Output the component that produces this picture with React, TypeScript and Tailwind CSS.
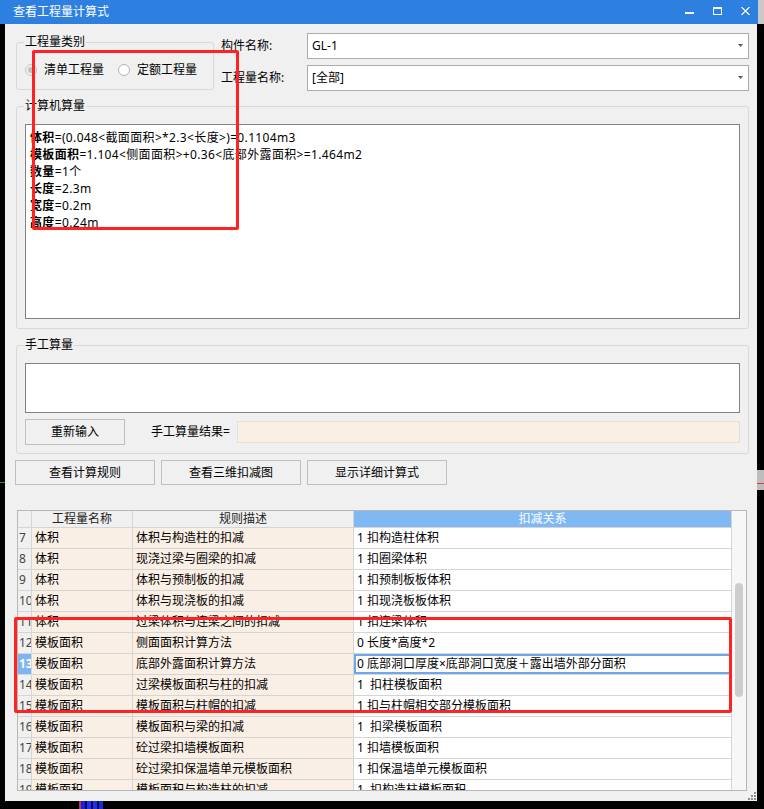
import React from 'react';

interface RuleRow {
  no: number;
  name: string;
  desc: string;
  relation: string;
}

const rules: RuleRow[] = [
  { no: 7, name: '体积', desc: '体积与构造柱的扣减', relation: '1 扣构造柱体积' },
  { no: 8, name: '体积', desc: '现浇过梁与圈梁的扣减', relation: '1 扣圈梁体积' },
  { no: 9, name: '体积', desc: '体积与预制板的扣减', relation: '1 扣预制板板体积' },
  { no: 10, name: '体积', desc: '体积与现浇板的扣减', relation: '1 扣现浇板板体积' },
  { no: 11, name: '体积', desc: '过梁体积与连梁之间的扣减', relation: '1 扣连梁体积' },
  { no: 12, name: '模板面积', desc: '侧面面积计算方法', relation: '0 长度*高度*2' },
  { no: 13, name: '模板面积', desc: '底部外露面积计算方法', relation: '0 底部洞口厚度×底部洞口宽度＋露出墙外部分面积' },
  { no: 14, name: '模板面积', desc: '过梁模板面积与柱的扣减', relation: '1\u00a0\u00a0扣柱模板面积' },
  { no: 15, name: '模板面积', desc: '模板面积与柱帽的扣减', relation: '1 扣与柱帽相交部分模板面积' },
  { no: 16, name: '模板面积', desc: '模板面积与梁的扣减', relation: '1\u00a0\u00a0扣梁模板面积' },
  { no: 17, name: '模板面积', desc: '砼过梁扣墙模板面积', relation: '1 扣墙模板面积' },
  { no: 18, name: '模板面积', desc: '砼过梁扣保温墙单元模板面积', relation: '1 扣保温墙单元模板面积' },
  { no: 19, name: '模板面积', desc: '模板面积与构造柱的扣减', relation: '1\u00a0\u00a0扣构造柱模板面积' },
];

const formulas = [
  { key: '体积', rest: '=(0.048<截面面积>*2.3<长度>)=0.1104m3' },
  { key: '模板面积', rest: '=1.104<侧面面积>+0.36<底部外露面积>=1.464m2' },
  { key: '数量', rest: '=1个' },
  { key: '长度', rest: '=2.3m' },
  { key: '宽度', rest: '=0.2m' },
  { key: '高度', rest: '=0.24m' },
];

const GroupBox: React.FC<{ title: string; className?: string; children: React.ReactNode }> = ({ title, className, children }) => (
  <fieldset className={`border border-[#d9d9d9] rounded-[3px] ${className ?? ''}`}>
    <legend className="ml-[7px] px-[1px] text-[12px] leading-[16px] text-black">{title}</legend>
    {children}
  </fieldset>
);

const Radio: React.FC<{ checked?: boolean; className?: string }> = ({ checked, className }) => (
  <span
    className={`w-[12px] h-[12px] rounded-full border flex items-center justify-center ${
      checked ? 'border-[#c6c6c6] bg-[#f0f0f0]' : 'border-[#b4b4b4] bg-white'
    } ${className ?? ''}`}
  >
    {checked && <span className="w-[6px] h-[6px] rounded-full bg-[#c0c0c0]" />}
  </span>
);

const Combo: React.FC<{ value: string }> = ({ value }) => (
  <div className="w-[442px] h-[26px] border border-[#adadad] bg-white flex items-center pl-[4px] pr-[4px]">
    <span>{value}</span>
    <svg className="ml-auto" width="6" height="4" viewBox="0 0 6 4">
      <path d="M0 0 H5 L2.5 3 Z" fill="#5a5a5a" />
    </svg>
  </div>
);

const Button: React.FC<{ label: string; className?: string }> = ({ label, className }) => (
  <button className={`border border-[#bfbfbf] bg-[#f0f0f0] text-[12px] text-black flex items-center justify-center ${className ?? ''}`}>
    {label}
  </button>
);

const App: React.FC = () => {
  return (
    <div className="relative w-[764px] h-[809px] overflow-hidden bg-black text-[12px] leading-[16px] text-black font-['Noto_Sans','Noto_Sans_CJK_SC',sans-serif]">
      {/* title bar */}
      <div className="flex h-[24px]">
        <div className="w-[758px] h-[24px] bg-[#2d7fe0] flex items-start">
          <span className="ml-[13px] mt-[4px] text-white text-[12px] leading-[16px]">查看工程量计算式</span>
          <div className="ml-auto mr-[8px] mt-[7px] flex gap-[19px]">
            <svg width="9" height="8" viewBox="0 0 9 8">
              <rect x="0" y="5" width="9" height="2" fill="#fff" />
            </svg>
            <svg width="9" height="8" viewBox="0 0 9 8">
              <rect x="0.5" y="0.5" width="8" height="7" fill="none" stroke="#fff" />
              <rect x="0" y="0" width="9" height="2" fill="#fff" />
            </svg>
            <svg width="9" height="8" viewBox="0 0 9 8">
              <path d="M0.5 0 L8.5 8 M8.5 0 L0.5 8" stroke="#fff" strokeWidth="1.2" />
            </svg>
          </div>
        </div>
        <div className="w-[6px] h-[24px] bg-[#c9c9c9]" />
      </div>

      <div className="flex">
        <div className="w-[5px] flex flex-col">
          <div className="mt-[458px] h-[1px] w-[5px] bg-[#1a9a2a]" />
        </div>

        {/* window body */}
        <div className="relative w-[752px] h-[777px] bg-[#f0f0f0] flex flex-col">
          <div className="flex items-start pt-[9px]">
            <GroupBox title="工程量类别" className="ml-[11px] mt-[1px] w-[198px] h-[56px]">
              <div className="flex items-center pl-[8px] mt-[12px]">
                <Radio checked />
                <span className="ml-[7px]">清单工程量</span>
                <Radio className="ml-[14px]" />
                <span className="ml-[7px]">定额工程量</span>
              </div>
            </GroupBox>
            <div className="ml-[7px] flex flex-col gap-[6px]">
              <div className="flex items-center">
                <span className="w-[86px]">构件名称:</span>
                <Combo value="GL-1" />
              </div>
              <div className="flex items-center">
                <span className="w-[86px]">工程量名称:</span>
                <Combo value="[全部]" />
              </div>
            </div>
          </div>

          <GroupBox title="计算机算量" className="ml-[11px] mt-[7px] w-[733px] pb-[9px]">
            <div className="ml-[8px] mt-[10px] w-[715px] h-[195px] border border-[#828282] bg-white pl-[4px] pt-[4px]">
              {formulas.map((f) => (
                <div key={f.key} className="leading-[17px] whitespace-nowrap tracking-[0.35px]">
                  <span className="font-bold">{f.key}</span>
                  <span>{f.rest}</span>
                </div>
              ))}
            </div>
          </GroupBox>

          <GroupBox title="手工算量" className="ml-[11px] mt-[8px] w-[733px] pb-[8px]">
            <div className="ml-[8px] mt-[10px] w-[715px] h-[50px] border border-[#828282] bg-white" />
            <div className="ml-[8px] mt-[6px] flex items-center">
              <Button label="重新输入" className="w-[100px] h-[26px]" />
              <span className="ml-[26px] w-[86px]">手工算量结果=</span>
              <div className="w-[503px] h-[22px] bg-[#faefe5] border border-[#e2dfdc]" />
            </div>
          </GroupBox>

          <div className="ml-[10px] mt-[6px] flex gap-[6px]">
            <Button label="查看计算规则" className="w-[140px] h-[25px]" />
            <Button label="查看三维扣减图" className="w-[140px] h-[25px]" />
            <Button label="显示详细计算式" className="w-[140px] h-[25px]" />
          </div>

          {/* rule grid */}
          <div className="ml-[12px] mt-[25px] w-[730px] h-[281px] border border-[#b7b7b7] bg-white flex overflow-hidden">
            <div className="w-[714px] flex flex-col overflow-hidden">
              <div className="flex h-[17px] border-b border-[#d5d5d5] shrink-0">
                <div className="w-[14px] bg-[#f0f0f0] border-r border-[#d5d5d5]" />
                <div className="w-[101px] bg-[#f0f0f0] border-r border-[#d5d5d5] text-center text-[#222]">工程量名称</div>
                <div className="w-[221px] bg-[#f0f0f0] border-r border-[#d5d5d5] text-center text-[#222]">规则描述</div>
                <div className="w-[378px] bg-[#80b8f4] border-r border-[#d5d5d5] text-center text-white">扣减关系</div>
              </div>
              {rules.map((r) => {
                const selected = r.no === 13;
                return (
                  <div key={r.no} className="flex h-[21px] border-b border-[#d5d5d5] shrink-0 leading-[20px] whitespace-nowrap">
                    <div
                      className={`w-[14px] border-r border-[#d5d5d5] pl-[1px] overflow-hidden ${
                        selected ? 'bg-[#7db4f1] text-white font-bold' : 'bg-[#f0f0f0] text-[#444]'
                      }`}
                    >
                      {r.no}
                    </div>
                    <div className="w-[101px] bg-[#faefe5] border-r border-[#d5d5d5] pl-[3px] overflow-hidden">{r.name}</div>
                    <div className="w-[221px] bg-[#faefe5] border-r border-[#d5d5d5] pl-[3px] overflow-hidden">{r.desc}</div>
                    <div
                      className={`w-[378px] bg-white border-r border-[#d5d5d5] pl-[3px] overflow-hidden ${
                        selected ? 'shadow-[inset_0_0_0_2px_#6ea8e8]' : ''
                      }`}
                    >
                      {r.relation}
                    </div>
                  </div>
                );
              })}
            </div>
            <div className="w-[14px] bg-[#f7f7f7] flex flex-col">
              <div className="ml-[3px] mt-[72px] w-[8px] h-[114px] rounded-full bg-[#cdcdcd]" />
            </div>
          </div>

          <svg className="absolute right-[1px] bottom-[1px]" width="9" height="9" viewBox="0 0 9 9">
            <rect x="7" y="1" width="2" height="2" fill="#8c8c8c" />
            <rect x="4" y="4" width="2" height="2" fill="#8c8c8c" />
            <rect x="7" y="4" width="2" height="2" fill="#8c8c8c" />
            <rect x="1" y="7" width="2" height="2" fill="#8c8c8c" />
            <rect x="4" y="7" width="2" height="2" fill="#8c8c8c" />
            <rect x="7" y="7" width="2" height="2" fill="#8c8c8c" />
          </svg>
        </div>

        <div className="w-[7px] flex flex-col">
          <div className="mt-[446px] h-[20px] w-[7px] bg-[#bdbdbd] flex flex-col">
            <div className="mt-[13px] h-[1px] bg-[#e23a3a]" />
          </div>
        </div>
      </div>

      {/* desktop taskbar sliver */}
      <div className="ml-[79px] flex h-[8px]">
        <div className="w-[2px] bg-[#c0304a]" />
        <div className="w-[4px] bg-[#1a22d8]" />
        <div className="w-[2px] bg-[#0a0a60]" />
        <div className="w-[4px] bg-[#2630e8]" />
        <div className="w-[2px] bg-[#0a0a60]" />
        <div className="w-[4px] bg-[#2030e0]" />
        <div className="w-[2px] bg-[#0a0a60]" />
        <div className="w-[4px] bg-[#1c28d0]" />
      </div>

      {/* red annotation boxes */}
      <div className="absolute left-[32px] top-[50px] w-[207px] h-[180px] border-[3px] border-[#ff2222] rounded-[2px]" />
      <div className="absolute left-[14px] top-[617px] w-[718px] h-[96px] border-[3px] border-[#ff2222] rounded-[2px]" />
    </div>
  );
};

export default App;
